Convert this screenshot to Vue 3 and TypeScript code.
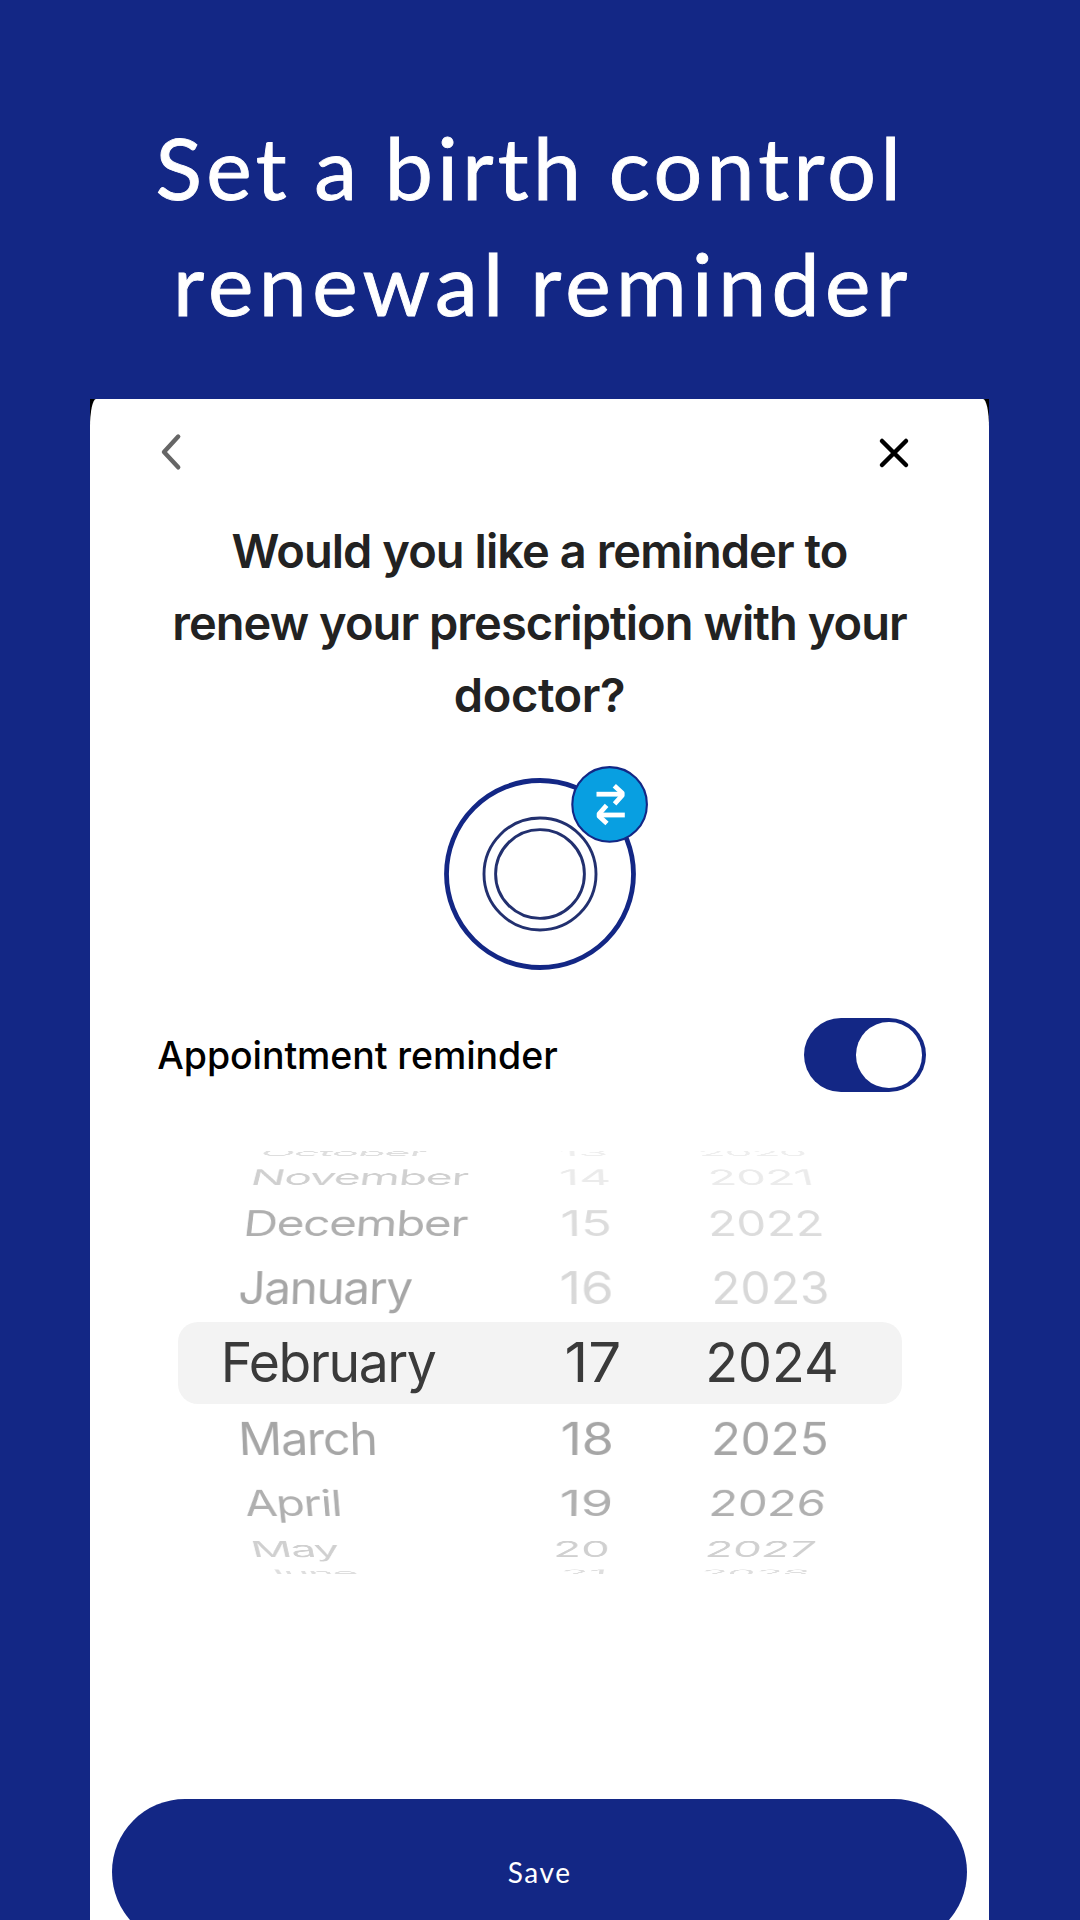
<script setup lang="ts">
interface WheelLabel {
  text: string
  x: number
  width: number
  color: string
  spacing: number
}
interface WheelRow {
  height: number
  squash: number
  tilt: number
  selected?: boolean
  labels: WheelLabel[]
}

const FONT_SIZE = 55
const AXIS = 450

const label = (text: string, left: number, right: number, color: string, spacing = 0): WheelLabel => ({
  text,
  x: left - 90,
  width: right - left,
  color,
  spacing,
})
const month = (text: string, left: number, right: number, color: string) => label(text, left, right, color, -1.5)

const rows: WheelRow[] = [
  { height: 18.3, squash: 0.16, tilt: -0.0025, labels: [month('October', 261, 425, '#dedede'), label('13', 561.5, 606, '#eeeeee'), label('2020', 702, 806.5, '#eeeeee')] },
  { height: 28.4, squash: 0.395, tilt: -0.0009, labels: [month('November', 252.7, 467.7, '#d0d0d0'), label('14', 561.5, 609, '#ebebeb'), label('2021', 712, 811.5, '#ebebeb')] },
  { height: 51.5, squash: 0.65, tilt: -0.0004, labels: [month('December', 246, 467.3, '#afafaf'), label('15', 563, 610, '#dcdcdc'), label('2022', 711.5, 822, '#dcdcdc')] },
  { height: 67.9, squash: 0.825, tilt: -0.00015, labels: [month('January', 240, 412, '#a6a6a6'), label('16', 562, 611, '#d8d8d8'), label('2023', 714.7, 827.3, '#d8d8d8')] },
  { height: 78.2, squash: 1, tilt: 0, selected: true, labels: [month('February', 225, 436, '#3a3a3a'), label('17', 567.3, 619.3, '#3a3a3a'), label('2024', 708.5, 836, '#3a3a3a')] },
  { height: 72.3, squash: 0.825, tilt: 0.00015, labels: [month('March', 242.8, 374.7, '#a6a6a6'), label('18', 563, 611, '#a6a6a6'), label('2025', 714, 826, '#a6a6a6')] },
  { height: 61.4, squash: 0.65, tilt: 0.0004, labels: [month('April', 246.7, 340, '#b0b0b0'), label('19', 562, 610, '#b0b0b0'), label('2026', 711, 822, '#b0b0b0')] },
  { height: 41.2, squash: 0.4, tilt: 0.0009, labels: [month('May', 256.5, 340, '#d0d0d0'), label('20', 556, 607, '#d0d0d0'), label('2027', 707, 812, '#d0d0d0')] },
  { height: 19.2, squash: 0.16, tilt: 0.0025, labels: [month('June', 264, 357.7, '#dedede'), label('21', 563, 603.3, '#dedede'), label('2028', 702, 805, '#dedede')] },
]

const ruler = document.createElement('canvas').getContext('2d')!
ruler.font = '1000px Inter'

// Projects a label onto the drum: stretched to its column width, squashed and tilted by its row.
function project(row: WheelRow, item: WheelLabel) {
  const m = ruler.measureText(item.text)
  const unit = FONT_SIZE / 1000
  const bearing = -m.actualBoundingBoxLeft * unit
  const ink = m.actualBoundingBoxRight * unit - bearing + item.spacing * (item.text.length - 1)
  const sx = item.width / ink
  const shift = item.x - bearing * sx - AXIS
  return {
    color: item.color,
    letterSpacing: `${item.spacing}px`,
    transform: `translateX(${AXIS}px) matrix3d(1,0,0,0,0,1,0,${row.tilt},0,0,1,0,0,0,0,1) translateX(${shift}px) scale(${sx}, ${row.squash})`,
  }
}
</script>

<template>
  <main class="page">
    <h1 class="title">
      <span class="title-first">Set a birth control</span>
      <span class="title-second">renewal reminder</span>
    </h1>

    <div class="frame">
      <section class="card">
        <header class="bar">
          <svg class="back" width="30" height="44" viewBox="0 0 30 44">
            <path d="M20.2 6.5 6 22 20.2 37.3" fill="none" stroke="#666" stroke-width="4.4" stroke-linecap="round" stroke-linejoin="round" />
          </svg>
          <svg class="close" width="40" height="40" viewBox="0 0 40 40">
            <path d="M8 8 32 32M32 8 8 32" fill="none" stroke="#000" stroke-width="4.5" stroke-linecap="round" />
          </svg>
        </header>

        <h2 class="question">
          <span>Would you like a reminder to</span>
          <span>renew your prescription with your</span>
          <span class="loose">doctor?</span>
        </h2>

        <svg class="ring" width="240" height="230" viewBox="0 0 240 230">
          <circle cx="110" cy="124" r="93.5" fill="none" stroke="#132785" stroke-width="4.8" />
          <circle cx="110" cy="124" r="56" fill="none" stroke="#22306f" stroke-width="2.9" />
          <circle cx="110" cy="124" r="44.4" fill="none" stroke="#22306f" stroke-width="2.9" />
          <circle cx="179.6" cy="54.4" r="37.3" fill="#089fe1" stroke="#132785" stroke-width="2.1" />
          <g fill="none" stroke="#fff" stroke-width="4.8">
            <path d="M166.5 44.2H192" />
            <path d="M184.3 35.8 192.2 43V45.4L184.6 53.8" stroke-linejoin="round" />
            <path d="M194.8 65H169" />
            <path d="M176.6 55.4 169.1 63.8V66.2L177 73.4" stroke-linejoin="round" />
          </g>
        </svg>

        <div class="setting">
          <span class="setting-name">Appointment reminder</span>
          <span class="toggle"><span class="knob"></span></span>
        </div>

        <div class="wheel">
          <div
            v-for="(row, i) in rows"
            :key="i"
            class="row"
            :class="{ selected: row.selected }"
            :style="{ height: row.height + 'px' }"
          >
            <span v-for="item in row.labels" :key="item.text" class="label" :style="project(row, item)">{{ item.text }}</span>
          </div>
        </div>

        <button class="save">Save</button>
      </section>
    </div>
  </main>
</template>

<style>
body {
  background: #132785;
}
</style>

<style scoped>
.page {
  box-sizing: border-box;
  width: 1080px;
  height: 1920px;
  overflow: hidden;
  background: #132785;
  display: flex;
  flex-direction: column;
}
.title {
  box-sizing: border-box;
  height: 399px;
  flex: none;
  margin: 0;
  padding-top: 109px;
  font: 400 86px/116px Lato, sans-serif;
  color: #fff;
  -webkit-text-stroke: 0.9px #fff;
}
.title span {
  display: block;
  white-space: nowrap;
}
.title-first {
  padding-left: 155.5px;
  letter-spacing: 4.35px;
  word-spacing: -3px;
}
.title-second {
  padding-left: 173px;
  letter-spacing: 5.4px;
  word-spacing: -6px;
}
.frame {
  flex: 1;
  width: 899px;
  margin-left: 90px;
  background: linear-gradient(#000 30px, #fff 30px);
  overflow: hidden;
}
.card {
  height: 1521px;
  background: #fff;
  border-radius: 6px 6px 0 0 / 28px 28px 0 0;
  display: flex;
  flex-direction: column;
}
.bar {
  height: 116px;
  flex: none;
  display: flex;
  justify-content: space-between;
  align-items: flex-start;
}
.back {
  margin: 31px 0 0 68px;
}
.close {
  margin: 33.5px 75px 0 0;
}
.question {
  margin: 0;
  font: 600 47px/72px Inter, sans-serif;
  color: #222;
  letter-spacing: -0.95px;
  text-align: center;
}
.question span {
  display: block;
  white-space: nowrap;
}
.question .loose {
  letter-spacing: -0.4px;
}
.ring {
  flex: none;
  margin: 19px 0 0 340px;
}
.setting {
  flex: none;
  height: 74px;
  margin-top: 38px;
  padding: 0 63px 0 67.3px;
  display: flex;
  align-items: center;
  justify-content: space-between;
}
.setting-name {
  padding-top: 2px;
  font: 500 37.5px/74px Inter, sans-serif;
  letter-spacing: -0.08px;
  color: #000;
}
.toggle {
  box-sizing: border-box;
  width: 122.4px;
  height: 74px;
  padding: 4px 4.5px;
  border-radius: 37px;
  background: #132785;
  display: flex;
  justify-content: flex-end;
}
.knob {
  width: 65.6px;
  height: 65.6px;
  border-radius: 50%;
  background: #fff;
}
.wheel {
  flex: none;
  height: 423px;
  margin-top: 59px;
  overflow: hidden;
}
.row {
  position: relative;
  display: grid;
  grid-template: 100% / 100%;
}
.selected::before {
  content: '';
  position: absolute;
  left: 88px;
  top: 5.4px;
  width: 723.5px;
  height: 81.4px;
  border-radius: 20px;
  background: #f3f3f3;
}
.label {
  position: relative;
  grid-area: 1 / 1;
  align-self: end;
  justify-self: start;
  height: 66px;
  font: 400 55px/66px Inter, sans-serif;
  white-space: nowrap;
  transform-origin: 0 53px;
}
.save {
  flex: none;
  height: 146px;
  margin: 225px 22px 0 22.3px;
  padding: 0;
  border: 0;
  border-radius: 73px;
  background: #132785;
  color: #fff;
  font: 400 28px/146px Lato, sans-serif;
  letter-spacing: 1.6px;
}
</style>
